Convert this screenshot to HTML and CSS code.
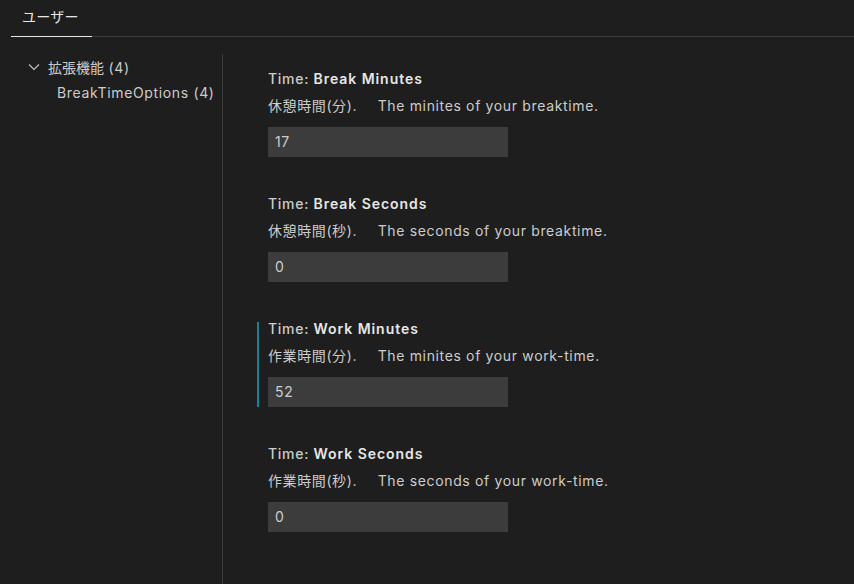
FILE: index.html
```html
<!DOCTYPE html>
<html lang="ja">
<head>
<meta charset="utf-8">
<link rel="stylesheet" href="styles.css">
</head>
<body>
<div class="tabs">
  <div class="tab active">ユーザー</div>
  <div class="tab-rest"></div>
</div>
<div class="main">
  <div class="toc">
    <div class="toc-group"><svg class="chev" width="12" height="8" viewBox="0 0 12 8"><path d="M1 1.5 L6 6.5 L11 1.5" fill="none" stroke="#c5c5c5" stroke-width="1.1"/></svg><span><span class="ja">拡張機能</span> (4)</span></div>
    <div class="toc-item">BreakTimeOptions (4)</div>
  </div>
  <div class="sep"></div>
  <div class="settings">
    <div class="item">
      <div class="title"><span class="cat">Time: </span><b>Break Minutes</b></div>
      <div class="desc"><span class="ja">休憩時間(分).　</span>The minites of your breaktime.</div>
      <div class="input">17</div>
    </div>
    <div class="item">
      <div class="title"><span class="cat">Time: </span><b>Break Seconds</b></div>
      <div class="desc"><span class="ja">休憩時間(秒).　</span>The seconds of your breaktime.</div>
      <div class="input">0</div>
    </div>
    <div class="item focused">
      <div class="title"><span class="cat">Time: </span><b>Work Minutes</b></div>
      <div class="desc"><span class="ja">作業時間(分).　</span>The minites of your work-time.</div>
      <div class="input">52</div>
    </div>
    <div class="item">
      <div class="title"><span class="cat">Time: </span><b>Work Seconds</b></div>
      <div class="desc"><span class="ja">作業時間(秒).　</span>The seconds of your work-time.</div>
      <div class="input">0</div>
    </div>
  </div>
</div>
</body>
</html>
```

FILE: styles.css
```css
html, body {
  margin: 0;
  padding: 0;
  background: #1e1e1e;
  height: 100%;
  overflow: hidden;
}
body {
  font-family: Inter, "Noto Sans CJK JP", sans-serif;
  font-size: 14px;
  color: #cccccc;
  letter-spacing: 0.65px;
}
.ja {
  letter-spacing: 0;
}
.desc .ja {
  letter-spacing: 0.6px;
  padding-right: 6px;
}
.tabs {
  display: flex;
  padding-left: 11px;
  height: 37px;
  box-sizing: border-box;
}
.tab {
  width: 81px;
  box-sizing: border-box;
  padding: 6px 0 0 11px;
  color: #e7e7e7;
  font-size: 14px;
  letter-spacing: 0.3px;
  border-bottom: 1px solid #e7e7e7;
}
.tab-rest {
  flex: 1;
  border-bottom: 1px solid #3c3c3c;
}
.main {
  display: flex;
  height: 547px;
}
.toc {
  width: 222px;
  padding-top: 19px;
  box-sizing: border-box;
}
.toc-group {
  display: flex;
  align-items: center;
  height: 22px;
  padding-left: 28px;
  color: #cccccc;
}
.chev {
  margin-right: 8px;
}
.toc-item {
  height: 26px;
  line-height: 30px;
  padding-left: 57px;
  color: #cccccc;
}
.sep {
  width: 1px;
  background: #3c3c3c;
  margin-top: 17px;
}
.settings {
  padding-top: 29px;
  padding-left: 34px;
}
.item {
  position: relative;
  padding-left: 11px;
  height: 125px;
  box-sizing: border-box;
  padding-top: 3px;
}
.item.focused::before {
  content: "";
  position: absolute;
  left: 0;
  top: 6px;
  width: 2px;
  height: 85px;
  background: #1b7f98;
}
.title {
  height: 20px;
  line-height: 20px;
  color: #e7e7e7;
}
.title .cat {
  color: #cccccc;
  font-weight: 500;
  letter-spacing: 0.7px;
}
.title b {
  font-weight: 600;
  color: #e7e7e7;
  letter-spacing: 0.95px;
}
.desc {
  margin-top: 7px;
  line-height: 20px;
  color: #cccccc;
}
.input {
  margin-top: 11px;
  width: 240px;
  height: 30px;
  box-sizing: border-box;
  background: #3c3c3c;
  color: #cccccc;
  padding-left: 7px;
  line-height: 30px;
}
```
